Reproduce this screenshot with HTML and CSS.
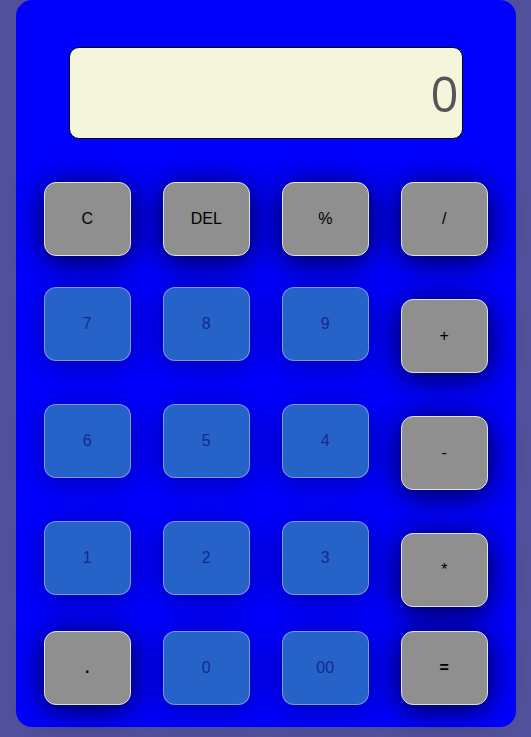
FILE: index.html
```html
<!DOCTYPE html>
<html>
<head>
<meta charset="utf-8">
<link rel="stylesheet" href="styles.css">
</head>
<body>
<div class="calc">
  <div class="display">0</div>
  <div class="keys">
    <button class="key op">C</button>
    <button class="key op">DEL</button>
    <button class="key op">%</button>
    <button class="key op">/</button>

    <button class="key num">7</button>
    <button class="key num">8</button>
    <button class="key num">9</button>
    <button class="key op shift">+</button>

    <button class="key num">6</button>
    <button class="key num">5</button>
    <button class="key num">4</button>
    <button class="key op shift">-</button>

    <button class="key num">1</button>
    <button class="key num">2</button>
    <button class="key num">3</button>
    <button class="key op shift">*</button>

    <button class="key op last bold">.</button>
    <button class="key num last">0</button>
    <button class="key num last">00</button>
    <button class="key op last bold">=</button>
  </div>
</div>
</body>
</html>
```
FILE: styles.css
```css
html, body {
  margin: 0;
  padding: 0;
}
body {
  background: #50509b;
  font-family: "Liberation Sans", Arial, sans-serif;
  height: 737px;
  overflow: hidden;
}
.calc {
  width: 500px;
  height: 727px;
  margin: 0 auto;
  background: #0000ff;
  border-radius: 16px;
  box-sizing: border-box;
  padding: 47px 28px 0 28px;
}
.display {
  width: 394px;
  height: 92px;
  margin: 0 auto;
  box-sizing: border-box;
  background: #f5f5dc;
  border: 1px solid #000;
  border-radius: 10px;
  color: #555;
  font-family: "Open Sans", sans-serif;
  font-size: 49px;
  text-align: right;
  padding: 4px 3px 0 0;
  line-height: 82px;
}
.keys {
  margin-top: 43px;
  display: grid;
  grid-template-columns: repeat(4, 87.5px);
  column-gap: 31.5px;
  row-gap: 31px;
  align-items: start;
}
.key {
  height: 74px;
  border-radius: 12px;
  font-family: "Liberation Sans", Arial, sans-serif;
  font-size: 16px;
  padding: 0;
  margin: 0;
  cursor: pointer;
}
.op {
  background: #8f8f8f;
  border: 1px solid #e2e2e2;
  color: #000;
  box-shadow: 0 4px 30px rgba(0, 0, 0, 0.8);
}
.num {
  background: #2563c8;
  border: 1px solid rgba(200, 200, 255, 0.55);
  color: #17288f;
  box-shadow: 0 4px 30px rgba(0, 0, 0, 0.35);
}
.shift {
  margin-top: 12px;
}
.last {
  margin-top: -7px;
}
.bold {
  font-weight: bold;
}
```
